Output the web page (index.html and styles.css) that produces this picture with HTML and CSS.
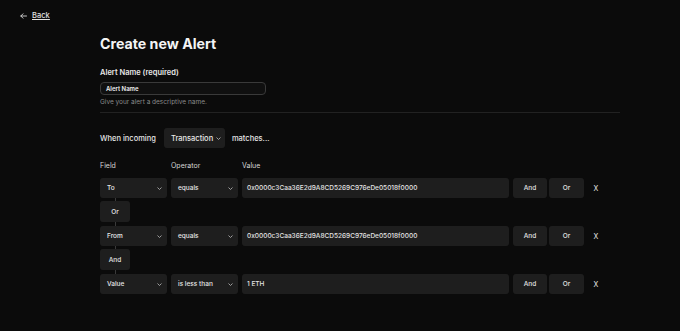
FILE: index.html
```html
<!DOCTYPE html>
<html lang="en">
<head>
<meta charset="utf-8">
<title>Create new Alert</title>
<link rel="stylesheet" href="styles.css">
</head>
<body>
<header class="topbar">
  <a class="back" href="#">
    <svg class="back-arrow" width="7" height="6" viewBox="0 0 7 6"><path d="M6.5 3H0.8M3 0.8L0.8 3L3 5.2" fill="none" stroke="#d8d8d8" stroke-width="0.9" stroke-linecap="round" stroke-linejoin="round"/></svg>
    <span>Back</span>
  </a>
</header>
<main class="page">
  <h1 class="title">Create new Alert</h1>
  <div class="field-block">
    <label class="label">Alert Name (required)</label>
    <div class="text-input">Alert Name</div>
    <p class="help">Give your alert a descriptive name.</p>
  </div>
  <hr class="divider">
  <div class="when">
    <span>When incoming</span>
    <div class="select select-type"><span>Transaction</span><svg class="chev" width="5" height="3" viewBox="0 0 5 3"><path d="M0.5 0.5L2.5 2.5L4.5 0.5" fill="none" stroke="#bbb" stroke-width="0.8"/></svg></div>
    <span>matches...</span>
  </div>
  <div class="cols">
    <span class="c-field">Field</span>
    <span class="c-op">Operator</span>
    <span class="c-val">Value</span>
  </div>
  <div class="conditions">
    <div class="row">
      <div class="select c-field"><span>To</span><svg class="chev" width="5" height="3" viewBox="0 0 5 3"><path d="M0.5 0.5L2.5 2.5L4.5 0.5" fill="none" stroke="#bbb" stroke-width="0.8"/></svg></div>
      <div class="select c-op"><span>equals</span><svg class="chev" width="5" height="3" viewBox="0 0 5 3"><path d="M0.5 0.5L2.5 2.5L4.5 0.5" fill="none" stroke="#bbb" stroke-width="0.8"/></svg></div>
      <div class="value c-val">0x0000c3Caa36E2d9A8CD5269C976eDe05018f0000</div>
      <div class="btn btn-and">And</div>
      <div class="btn btn-or">Or</div>
      <div class="remove">X</div>
    </div>
    <div class="joiner"><div class="btn">Or</div></div>
    <div class="row">
      <div class="select c-field"><span>From</span><svg class="chev" width="5" height="3" viewBox="0 0 5 3"><path d="M0.5 0.5L2.5 2.5L4.5 0.5" fill="none" stroke="#bbb" stroke-width="0.8"/></svg></div>
      <div class="select c-op"><span>equals</span><svg class="chev" width="5" height="3" viewBox="0 0 5 3"><path d="M0.5 0.5L2.5 2.5L4.5 0.5" fill="none" stroke="#bbb" stroke-width="0.8"/></svg></div>
      <div class="value c-val">0x0000c3Caa36E2d9A8CD5269C976eDe05018f0000</div>
      <div class="btn btn-and">And</div>
      <div class="btn btn-or">Or</div>
      <div class="remove">X</div>
    </div>
    <div class="joiner"><div class="btn">And</div></div>
    <div class="row">
      <div class="select c-field"><span>Value</span><svg class="chev" width="5" height="3" viewBox="0 0 5 3"><path d="M0.5 0.5L2.5 2.5L4.5 0.5" fill="none" stroke="#bbb" stroke-width="0.8"/></svg></div>
      <div class="select c-op"><span>is less than</span><svg class="chev" width="5" height="3" viewBox="0 0 5 3"><path d="M0.5 0.5L2.5 2.5L4.5 0.5" fill="none" stroke="#bbb" stroke-width="0.8"/></svg></div>
      <div class="value c-val">1 ETH</div>
      <div class="btn btn-and">And</div>
      <div class="btn btn-or">Or</div>
      <div class="remove">X</div>
    </div>
  </div>
</main>
</body>
</html>
```
FILE: styles.css
```css
* { box-sizing: border-box; }
html, body { margin: 0; padding: 0; }
body {
  background: #0b0b0b;
  color: #ececec;
  font-family: Inter, "Liberation Sans", sans-serif;
  width: 680px;
  height: 331px;
  overflow: hidden;
}
.topbar {
  display: flex;
  align-items: center;
  height: 32px;
  padding-left: 20px;
}
.back {
  display: flex;
  align-items: center;
  gap: 5px;
  color: #e0e0e0;
  font-size: 7.5px;
  font-weight: 500;
  line-height: 10px;
}
.back span { text-decoration: underline; text-underline-offset: 1px; }
.page {
  margin-left: 100px;
  width: 520px;
}
.title {
  margin: 2px 0 0;
  font-size: 14.2px;
  line-height: 20px;
  font-weight: 700;
  color: #f4f4f4;
}
.field-block { margin-top: 14px; }
.label {
  display: block;
  font-size: 7.5px;
  line-height: 10px;
  font-weight: 600;
  color: #e8e8e8;
}
.text-input {
  margin-top: 4px;
  width: 166px;
  height: 13px;
  border: 1px solid #3a3a3a;
  border-radius: 4px;
  background: #101010;
  font-size: 6px;
  font-weight: 600;
  line-height: 11px;
  padding-left: 5px;
  color: #f0f0f0;
}
.help {
  margin: 2px 0 0;
  font-size: 6.5px;
  line-height: 10px;
  color: #8a8a8a;
}
.divider {
  margin: 5px 0 0;
  border: 0;
  height: 1px;
  background: #222;
}
.when {
  margin-top: 15px;
  display: flex;
  align-items: center;
  gap: 7px;
  font-size: 7.5px;
  font-weight: 500;
  color: #e6e6e6;
}
.select {
  display: flex;
  align-items: center;
  justify-content: space-between;
  height: 20px;
  border-radius: 3px;
  background: #1e1e1e;
  padding: 0 5px 0 7px;
  font-size: 6.5px;
  font-weight: 500;
  color: #e8e8e8;
}
.select-type {
  width: 61px;
  font-size: 7.5px;
  padding: 0 4px 0 7px;
  margin-left: 1px;
}
.chev { flex: none; }
.cols {
  margin-top: 13px;
  display: flex;
  gap: 4px;
  font-size: 7px;
  line-height: 10px;
  color: #d6d6d6;
}
.c-field { width: 67px; flex: none; }
.c-op { width: 67px; flex: none; }
.c-val { width: 267px; flex: none; }
.conditions { margin-top: 7px; }
.row {
  display: flex;
  align-items: center;
  gap: 4px;
  height: 20px;
}
.value {
  height: 20px;
  border-radius: 3px;
  background: #1e1e1e;
  padding-left: 5px;
  font-size: 6.5px;
  line-height: 20px;
  font-weight: 500;
  color: #e4e4e4;
}
.btn {
  display: flex;
  align-items: center;
  justify-content: center;
  height: 20px;
  border-radius: 3px;
  background: #1e1e1e;
  font-size: 6.5px;
  font-weight: 500;
  color: #e6e6e6;
}
.btn-and { width: 34px; }
.btn-or { width: 35px; margin-left: -2px; }
.remove {
  width: 16px;
  text-align: center;
  font-size: 7px;
  color: #e8e8e8;
}
.joiner {
  position: relative;
  padding: 3px 0 4px;
}
.joiner::before {
  content: "";
  position: absolute;
  left: 15px;
  top: 0;
  bottom: 0;
  width: 1px;
  background: #3a3a3a;
}
.joiner .btn {
  position: relative;
  width: 30px;
  height: 21px;
}
```
